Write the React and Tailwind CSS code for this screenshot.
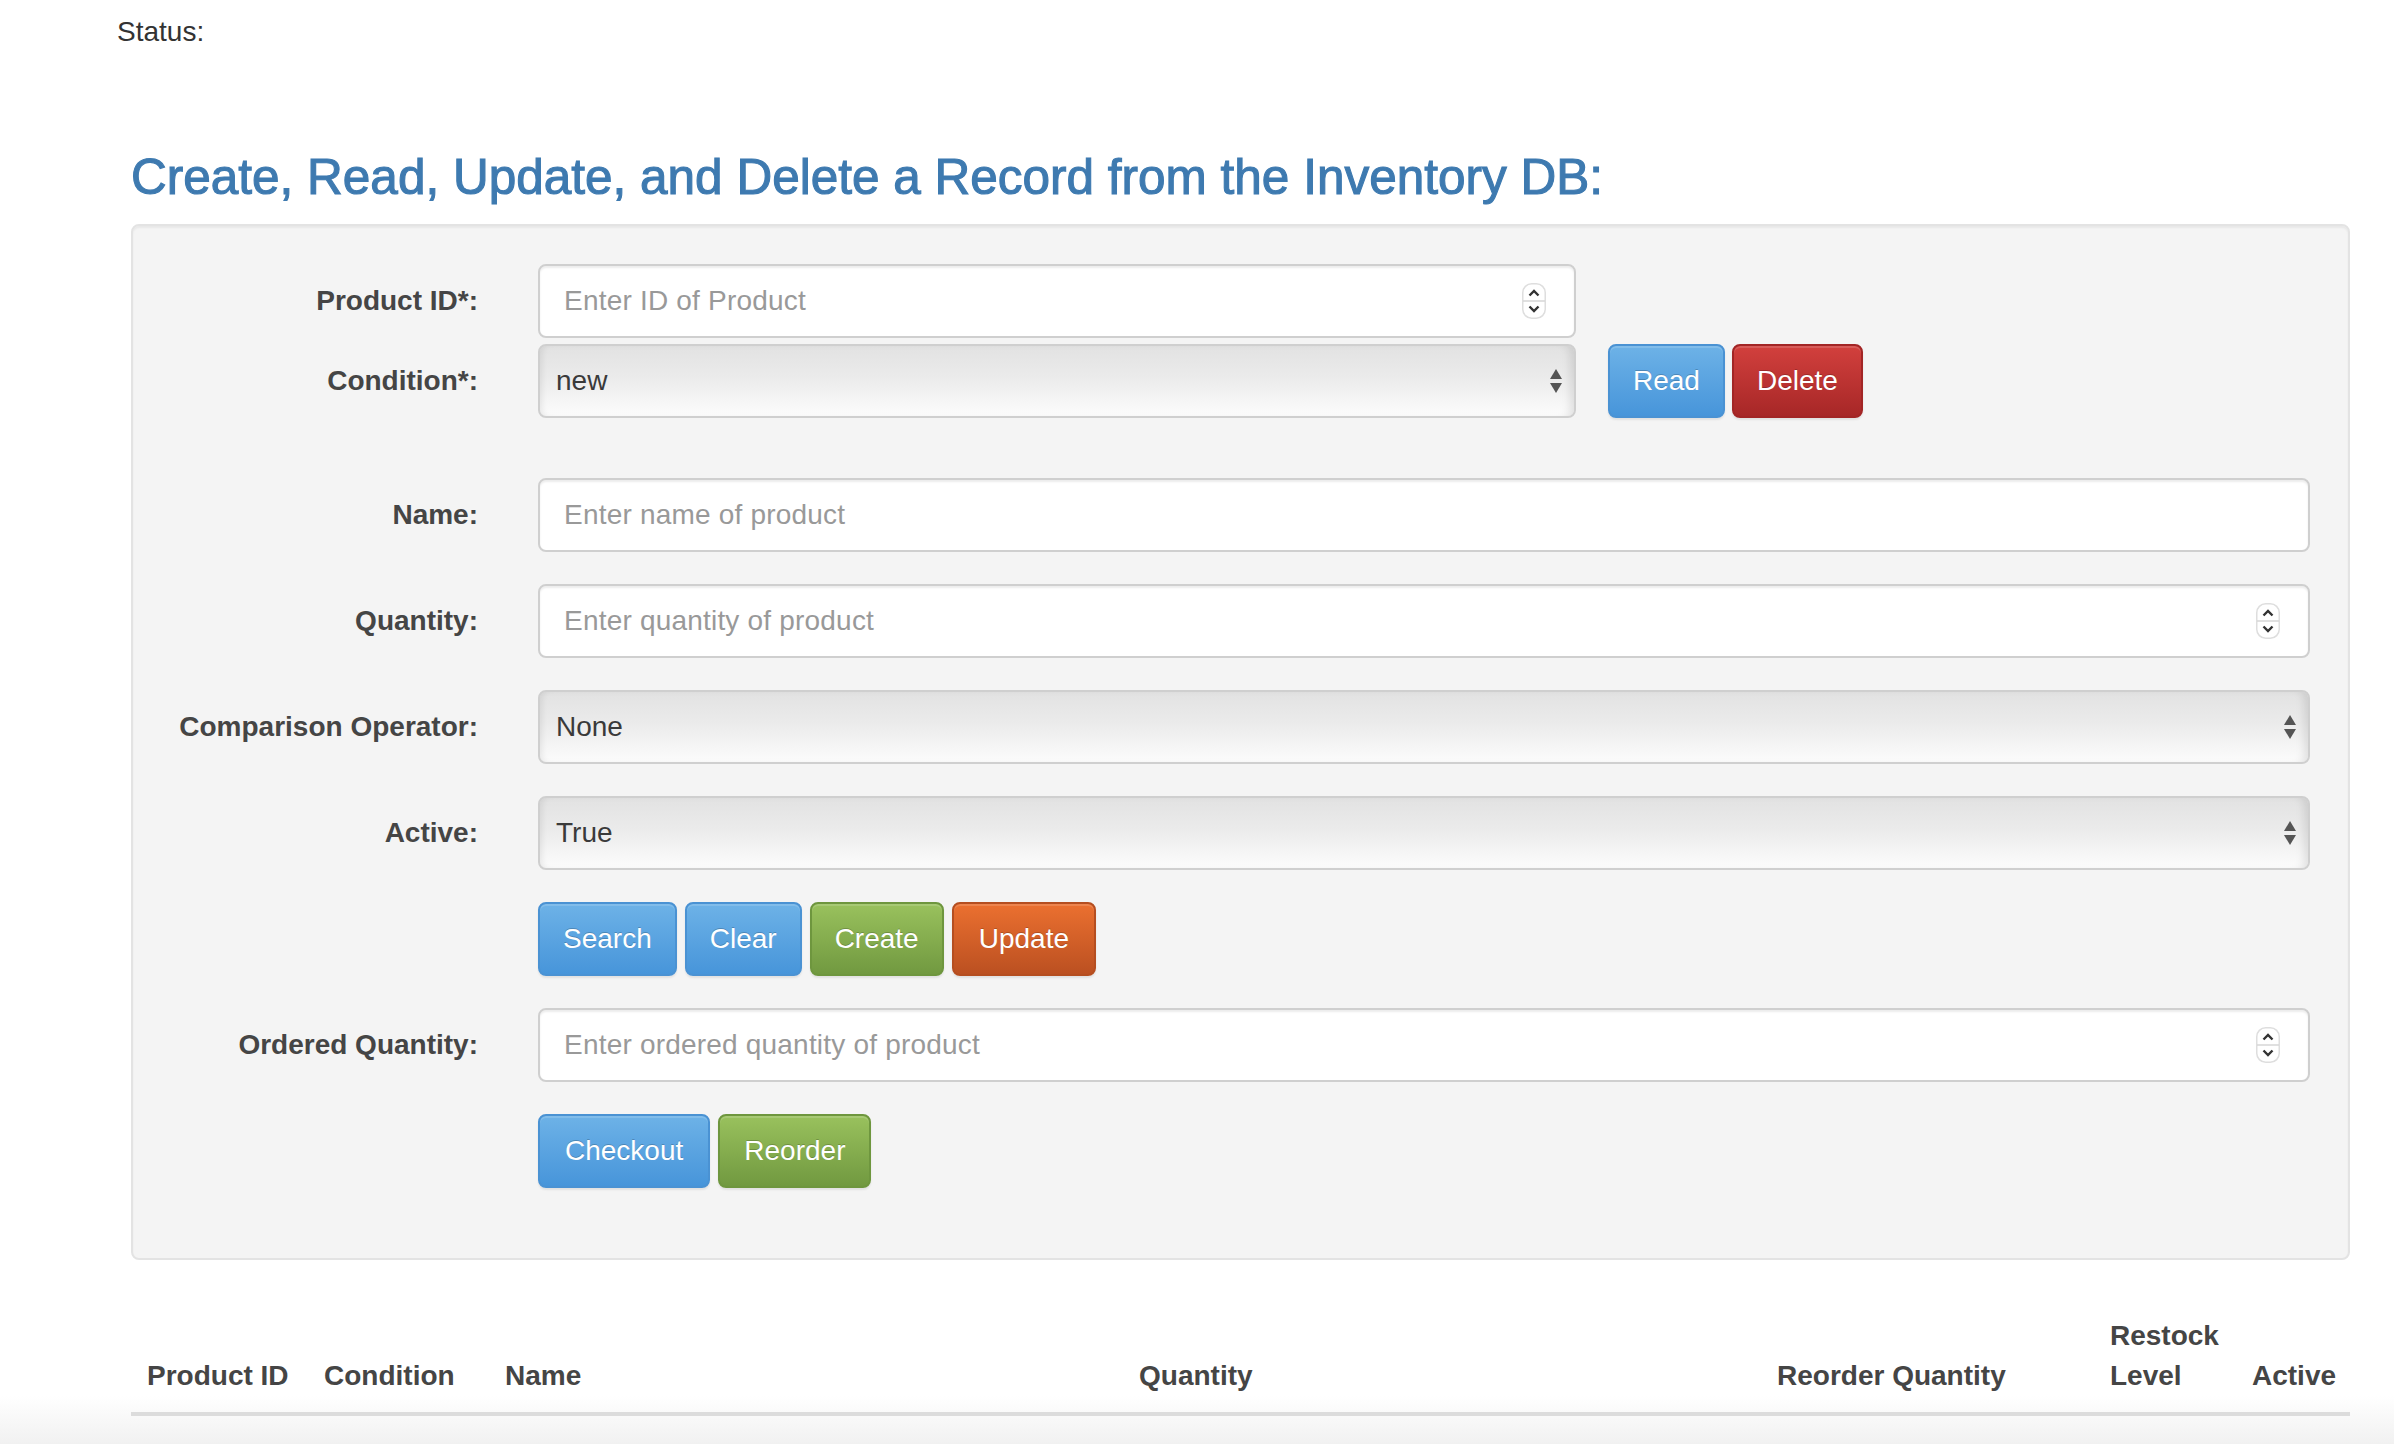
import React from 'react';

function Spinner() {
  return (
    <svg width="24" height="36" viewBox="0 0 24 36" className="shrink-0">
      <rect x="0.75" y="0.75" width="22.5" height="34.5" rx="9" fill="#fff" stroke="#dedede" strokeWidth="1.5" />
      <line x1="1" y1="18" x2="23" y2="18" stroke="#d6d6d6" strokeWidth="1.5" />
      <path d="M7.5 12.5 L12 8 L16.5 12.5" fill="none" stroke="#333" strokeWidth="2.4" />
      <path d="M7.5 23.5 L12 28 L16.5 23.5" fill="none" stroke="#333" strokeWidth="2.4" />
    </svg>
  );
}

function SelectArrows() {
  return (
    <svg width="12" height="26" viewBox="0 0 12 26" className="shrink-0">
      <path d="M6 1 L12 11 L0 11 Z" fill="#555" />
      <path d="M0 15 L12 15 L6 25 Z" fill="#555" />
    </svg>
  );
}

function TextInput({ placeholder, number }) {
  return (
    <div className="flex items-center h-[74px] w-full bg-white border-2 border-[#cfcfcf] rounded-[8px] shadow-[inset_0_2px_2px_rgba(0,0,0,0.075)] pl-[24px] pr-[28px]">
      <input
        type="text"
        placeholder={placeholder}
        className="flex-1 min-w-0 bg-transparent outline-none text-[28px] tracking-[0.2px] text-[#555] placeholder:text-[#999]"
      />
      {number && <Spinner />}
    </div>
  );
}

function Select({ value }) {
  return (
    <div className="flex items-center justify-between h-[74px] w-full border-2 border-[#cfcfcf] rounded-[8px] bg-[linear-gradient(to_bottom,#e2e2e2,#ebebeb_45%,#fcfcfc)] shadow-[inset_6px_0_6px_-4px_rgba(0,0,0,0.08),inset_-8px_0_8px_-4px_rgba(0,0,0,0.1)] pl-[16px] pr-[12px]">
      <span className="text-[28px] text-[#3a3a3a]">{value}</span>
      <SelectArrows />
    </div>
  );
}

const btnColors = {
  blue: 'bg-[linear-gradient(to_bottom,#6db2e7,#4795da)] border-[#4a92d3]',
  red: 'bg-[linear-gradient(to_bottom,#d2403d,#a72727)] border-[#a22525]',
  green: 'bg-[linear-gradient(to_bottom,#99c15d,#719940)] border-[#6e963e]',
  orange: 'bg-[linear-gradient(to_bottom,#eb7030,#bb5021)] border-[#b54e20]',
};

function Btn({ color, children, pad = 'px-[23px]' }) {
  return (
    <button
      className={`h-[74px] ${pad} border-2 rounded-[8px] text-white text-[28px] [text-shadow:0_-1px_0_rgba(0,0,0,0.2)] shadow-[inset_0_2px_0_rgba(255,255,255,0.15),0_2px_2px_rgba(0,0,0,0.075)] ${btnColors[color]}`}
    >
      {children}
    </button>
  );
}

function Row({ label, children, className = '' }) {
  return (
    <div className={`flex items-center ${className}`}>
      <label className="w-[307px] shrink-0 text-right font-bold text-[28px] text-[#454545]">{label}</label>
      <div className="ml-[60px] flex-1 flex items-center">{children}</div>
    </div>
  );
}

export default function App() {
  const cols = [
    ['Product ID', 177],
    ['Condition', 181],
    ['Name', 634],
    ['Quantity', 638],
    ['Reorder Quantity', 333],
    ['Restock Level', 142],
    ['Active', 114],
  ];

  return (
    <div className="min-h-[1444px] h-[1444px] overflow-hidden bg-[linear-gradient(to_bottom,#fff_1396px,#f1f1f1_1444px)] font-['Liberation_Sans',Arial,sans-serif] text-[#333]">
      {/* Status line */}
      <div className="pt-[12px] pl-[117px] text-[28px] leading-[40px]">Status:</div>

      <div className="ml-[131px] mr-[44px]">
        <h3 className="mt-[97px] mb-[20px] text-[49.5px] leading-[55px] text-[#3e7ab0] [-webkit-text-stroke:1.1px_#3e7ab0]">
          Create, Read, Update, and Delete a Record from the Inventory DB:
        </h3>

        {/* Form well */}
        <div className="bg-[#f4f4f4] border-2 border-[#e3e3e3] rounded-[8px] shadow-[inset_0_2px_2px_rgba(0,0,0,0.05)] px-[38px] pt-[38px] pb-[70px]">
          <Row label="Product ID*:">
            <div className="w-[1038px]">
              <TextInput placeholder="Enter ID of Product" number />
            </div>
          </Row>
          <Row label="Condition*:" className="mt-[6px]">
            <div className="w-[1038px]">
              <Select value="new" />
            </div>
            <div className="ml-[32px] flex gap-[7px]">
              <Btn color="blue">Read</Btn>
              <Btn color="red">Delete</Btn>
            </div>
          </Row>

          <Row label="Name:" className="mt-[60px]">
            <TextInput placeholder="Enter name of product" />
          </Row>
          <Row label="Quantity:" className="mt-[32px]">
            <TextInput placeholder="Enter quantity of product" number />
          </Row>
          <Row label="Comparison Operator:" className="mt-[32px]">
            <Select value="None" />
          </Row>
          <Row label="Active:" className="mt-[32px]">
            <Select value="True" />
          </Row>
          <Row label="" className="mt-[32px]">
            <div className="flex gap-[8px]">
              <Btn color="blue">Search</Btn>
              <Btn color="blue">Clear</Btn>
              <Btn color="green">Create</Btn>
              <Btn color="orange" pad="px-[25px]">Update</Btn>
            </div>
          </Row>
          <Row label="Ordered Quantity:" className="mt-[32px]">
            <TextInput placeholder="Enter ordered quantity of product" number />
          </Row>
          <Row label="" className="mt-[32px]">
            <div className="flex gap-[8px]">
              <Btn color="blue" pad="px-[25px]">Checkout</Btn>
              <Btn color="green" pad="px-[24px]">Reorder</Btn>
            </div>
          </Row>
        </div>

        {/* Results table */}
        <table className="mt-[40px] w-full table-fixed border-collapse">
          <colgroup>
            {cols.map(([name, w]) => (
              <col key={name} style={{ width: w }} />
            ))}
          </colgroup>
          <thead>
            <tr>
              {cols.map(([name]) => (
                <th
                  key={name}
                  className="px-[16px] py-[16px] text-left align-bottom font-bold text-[28px] leading-[40px] text-[#454545] border-b-4 border-[#dcdcdc]"
                >
                  {name === 'Restock Level' ? (
                    <>
                      Restock
                      <br />
                      Level
                    </>
                  ) : (
                    name
                  )}
                </th>
              ))}
            </tr>
          </thead>
        </table>
      </div>
    </div>
  );
}
